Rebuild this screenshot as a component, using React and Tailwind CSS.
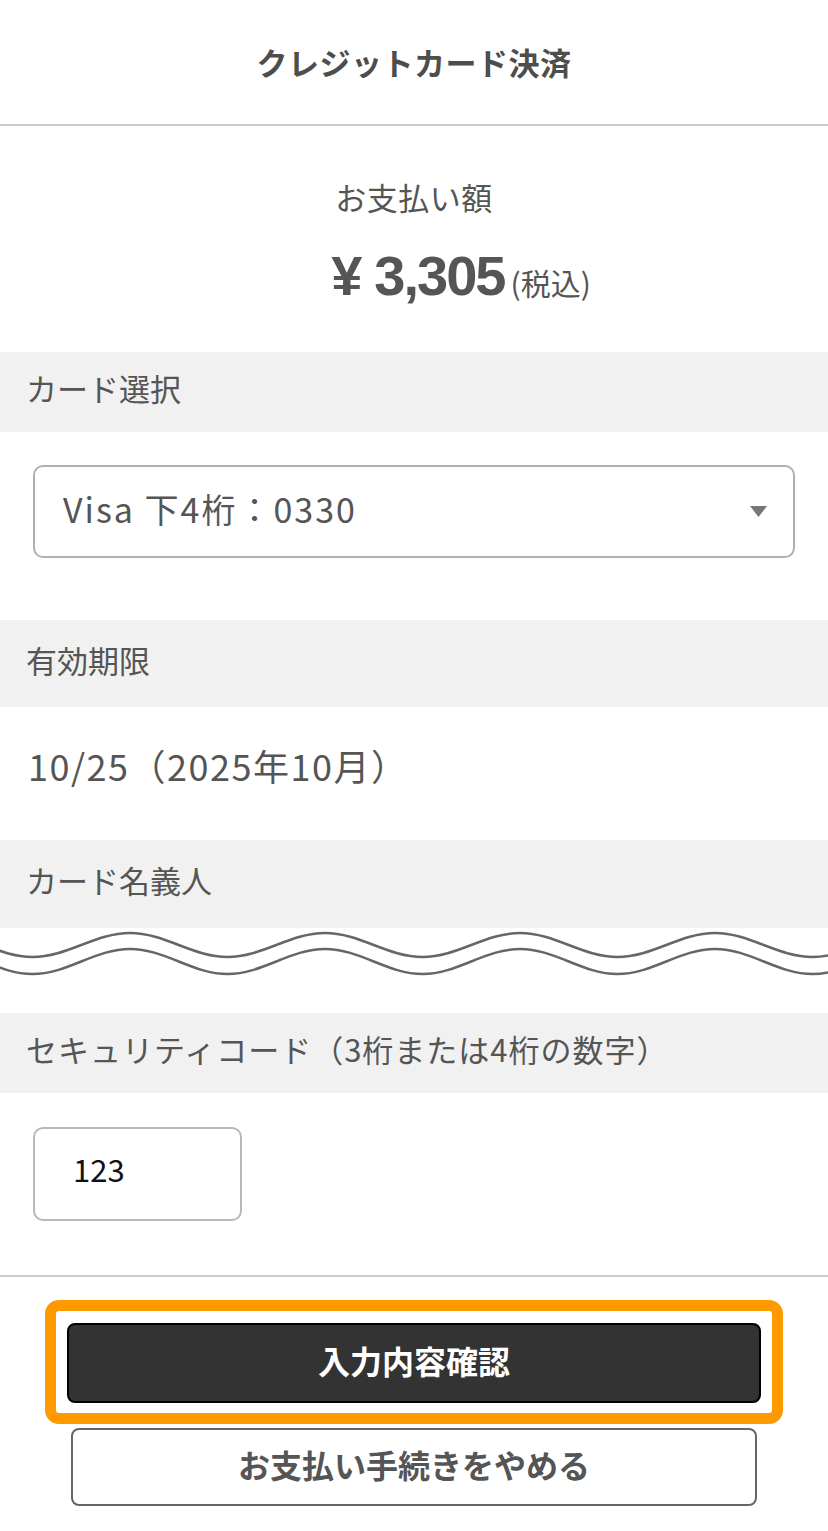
import React from "react";

function wavePath(yTrough, yPeak) {
  const h = 97.5;
  let x = 32.5 - 195;
  let d = `M ${x} ${yTrough}`;
  let up = true;
  while (x < 900) {
    const y0 = up ? yTrough : yPeak;
    const y1 = up ? yPeak : yTrough;
    d += ` C ${x + h * 0.36} ${y0}, ${x + h * 0.64} ${y1}, ${x + h} ${y1}`;
    x += h;
    up = !up;
  }
  return d;
}

function Wave() {
  return (
    <svg width="828" height="85" viewBox="0 0 828 85" className="block">
      <path d={wavePath(29, 5)} fill="none" stroke="#666" strokeWidth="2.5" />
      <path d={wavePath(46, 21)} fill="none" stroke="#666" strokeWidth="2.5" />
    </svg>
  );
}

function Label({ children, h, extra = "" }) {
  return (
    <div className={`flex items-center bg-[#f1f1f1] pl-[26px] pb-[7px] text-[31px] text-[#555] ${h} ${extra}`}>
      {children}
    </div>
  );
}

export default function App() {
  return (
    <div
      className="w-[828px] h-[1531px] bg-white overflow-hidden"
      style={{ fontFamily: '"Noto Sans CJK JP", "Noto Sans", sans-serif' }}
    >
      <header className="h-[126px] border-b-2 border-[#cccccc] flex items-center justify-center">
        <h1 className="text-[31px] font-bold text-[#4d4d4d] tracking-[0.5px]">クレジットカード決済</h1>
      </header>

      <section className="h-[226px] flex flex-col items-center">
        <div className="mt-[51px] text-[31px] text-[#555] leading-[40px] tracking-[0.5px]">お支払い額</div>
        <div className="mt-[31px] flex items-baseline pl-[94px] text-[#555]">
          <span
            className="text-[56px] font-bold leading-none"
            style={{ fontFamily: '"Liberation Sans", sans-serif' }}
          >
            ¥<span className="ml-[12px] tracking-[-2px]">3,305</span>
          </span>
          <span className="text-[30px] ml-[6px] leading-none">(税込)</span>
        </div>
      </section>

      <Label h="h-[80px]">カード選択</Label>
      <div className="h-[188px] px-[33px] pt-[33px]">
        <div className="h-[93px] rounded-[10px] border-2 border-[#b0b0b0] flex items-center justify-between pl-[28px] pr-[26px]">
          <span className="text-[34px] text-[#555] tracking-[2px] pb-[6px]">Visa 下4桁：0330</span>
          <svg width="17" height="11" viewBox="0 0 17 11">
            <path d="M0 0 H17 L8.5 11 Z" fill="#777" />
          </svg>
        </div>
      </div>

      <Label h="h-[87px]">有効期限</Label>
      <div className="h-[133px] flex items-center pl-[28px] pb-[18px]">
        <span className="text-[36px] text-[#555] tracking-[1.5px]">10/25（2025年10月）</span>
      </div>

      <Label h="h-[88px]">カード名義人</Label>
      <Wave />

      <Label h="h-[80px]" extra="tracking-[1px]">セキュリティコード（3桁または4桁の数字）</Label>
      <div className="h-[182px] pl-[33px] pt-[34px]">
        <div className="w-[209px] h-[94px] rounded-[10px] border-2 border-[#b8b8b8] flex items-center pl-[38px] pb-[10px]">
          <span className="text-[31px] text-[#111]">123</span>
        </div>
      </div>

      <div className="border-t-2 border-[#cccccc] flex flex-col items-center pt-[46px]">
        <div className="relative">
          <div className="absolute left-[-22px] right-[-22px] top-[-23px] bottom-[-21px] rounded-[14px] border-[11px] border-[#ff9900] pointer-events-none" />
          <button className="w-[694px] h-[80px] rounded-[8px] border-2 border-black bg-[#333333] text-white text-[32px] font-bold flex items-center justify-center pb-[6px]">
            入力内容確認
          </button>
        </div>
        <button className="mt-[25px] w-[686px] h-[78px] rounded-[8px] border-2 border-[#666] bg-white text-[#555] text-[32px] font-bold flex items-center justify-center pb-[6px]">
          お支払い手続きをやめる
        </button>
      </div>
    </div>
  );
}
